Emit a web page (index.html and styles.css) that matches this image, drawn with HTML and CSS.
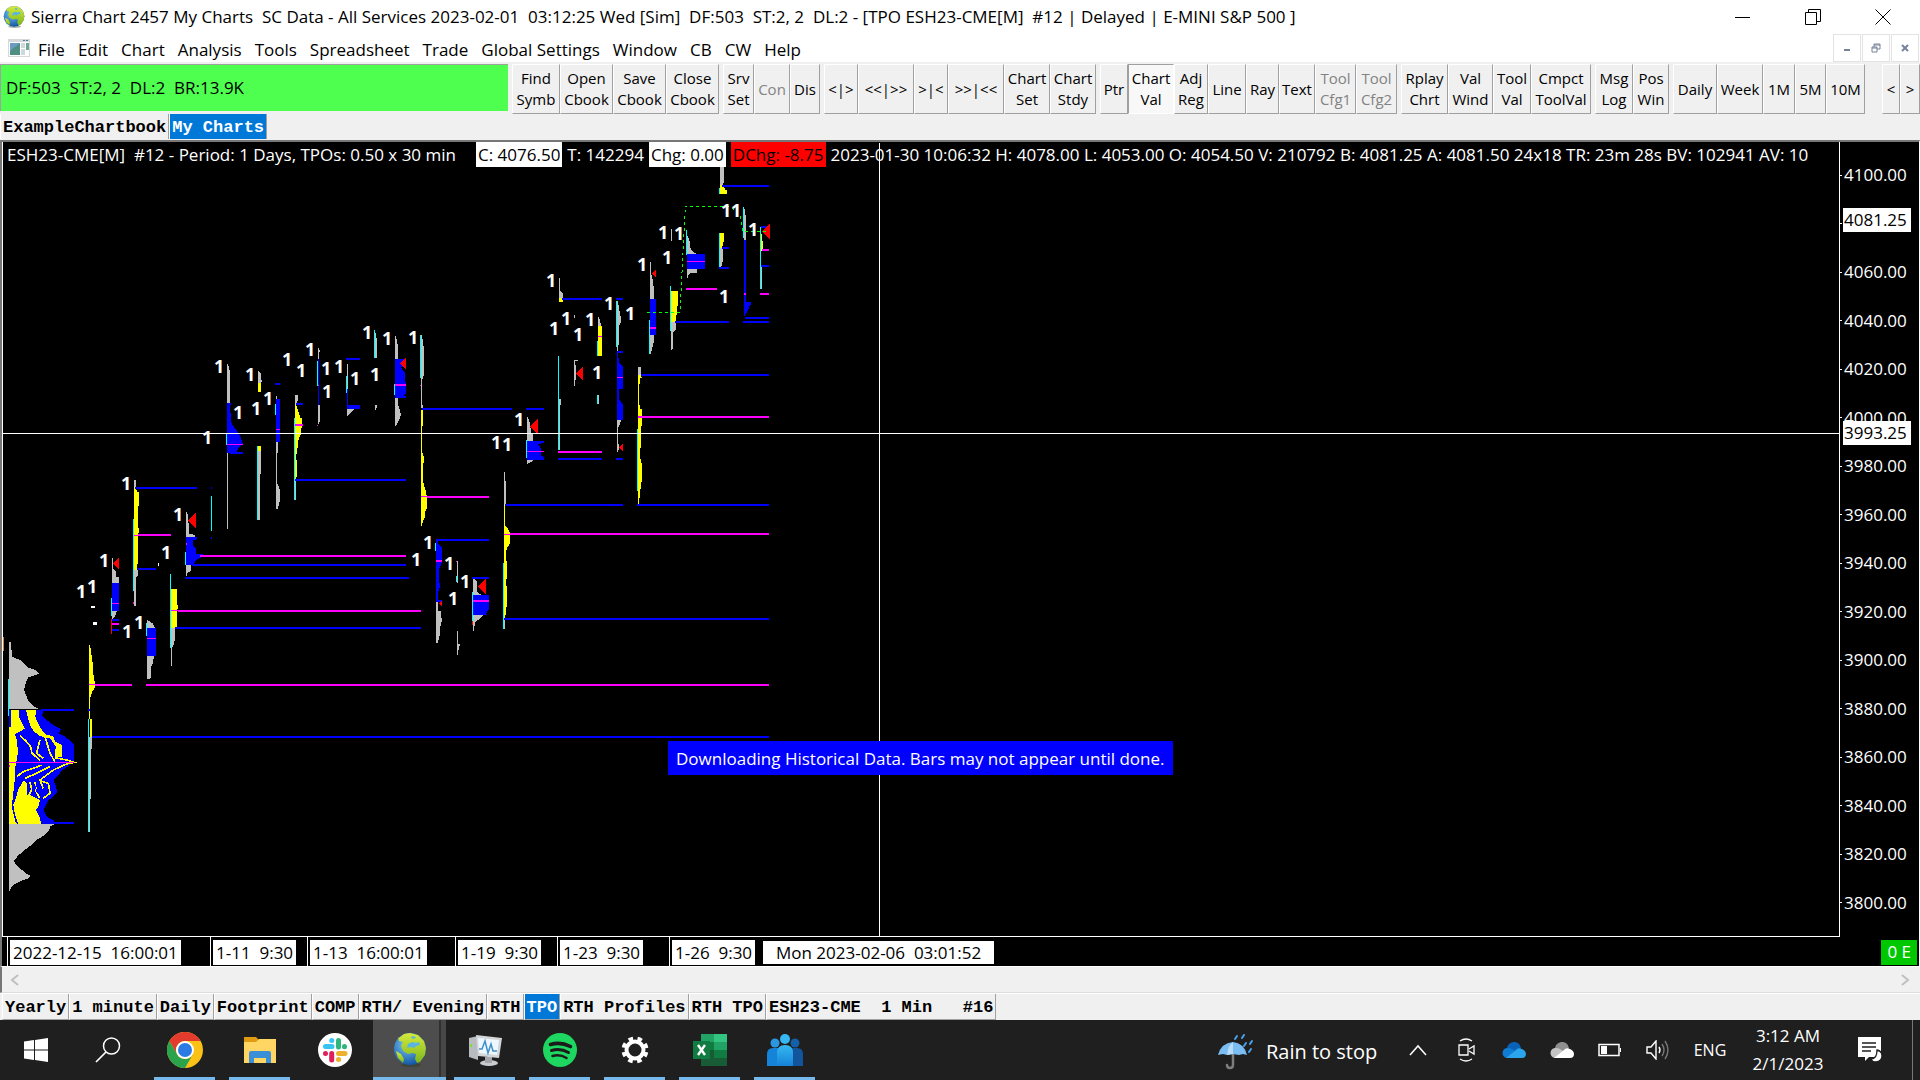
FILE: index.html
```html
<!DOCTYPE html>
<html lang="en">
<head>
<meta charset="utf-8">
<title>Sierra Chart</title>
<link rel="stylesheet" href="styles.css">
</head>
<body>
<svg class="defs" aria-hidden="true">
  <defs>
    <radialGradient id="sea" cx=".4" cy=".35" r=".7"><stop offset="0" stop-color="#7cc8f4"/><stop offset="1" stop-color="#0b4f9e"/></radialGradient>
    <linearGradient id="land" x1="0" y1="0" x2="0" y2="1"><stop offset="0" stop-color="#d6ea3c"/><stop offset="1" stop-color="#7db61c"/></linearGradient>
    <linearGradient id="people" x1="0" y1="0" x2="0" y2="1"><stop offset="0" stop-color="#35b8f1"/><stop offset="1" stop-color="#1583d8"/></linearGradient>
    <symbol id="globe" viewBox="0 0 34 36">
      <ellipse cx="18" cy="33" rx="10" ry="2" fill="#2b3a20" opacity=".4"/>
      <circle cx="17" cy="17" r="16" fill="url(#sea)"/>
      <path d="M6 6 11 2l6-1 8 2 6 6 2 7-1 7-5 7-3 1-2-4 1-5-4-1-4 1-5-3-2-5 2-4-4-1-1-4z" fill="url(#land)"/>
      <path d="M3 19l5 3 3 5-1 4-5-5z" fill="url(#land)"/>
      <path d="M15 12l4-2 4 1 3-1 1 3-4 1-2 2-3-1-4 1zM19 4l4 1-2 2-3-1z" fill="#5ab4e0"/>
    </symbol>
  </defs>
</svg>

<header class="titlebar">
  <svg class="app-icon" viewBox="0 0 34 36"><use href="#globe"/></svg>
  <h1 class="title">Sierra Chart 2457 My Charts&nbsp; SC Data - All Services 2023-02-01&nbsp; 03:12:25 Wed [Sim]&nbsp; DF:503&nbsp; ST:2, 2&nbsp; DL:2 - [TPO ESH23-CME[M]&nbsp; #12 | Delayed | E-MINI S&amp;P 500 ]</h1>
  <div class="win-controls">
    <button aria-label="Minimize"><svg width="16" height="16"><path d="M0 8.500H15" stroke="#000"/></svg></button>
    <button aria-label="Restore"><svg width="16" height="16"><path d="M.5 3.500h11v12h-11zM3.500 3V.5h12v12H12" fill="none" stroke="#000"/></svg></button>
    <button aria-label="Close"><svg width="16" height="16"><path d="M.5.5l15 15M15.500.5l-15 15" stroke="#000"/></svg></button>
  </div>
</header>

<nav class="menubar">
  <svg class="doc-icon" width="22" height="18"><path fill="#d5d9dc" d="M0 0h22v18H0z"/><path fill="#fff" d="M1 3h20v14H1z"/><path fill="#4f8f83" d="M2 4h10v12H2z"/><path fill="#6b9bc0" d="M2 4h10L2 12z"/><path fill="#cfd8de" d="M13 4h4v5h-4zM13 10h4v6h-4z"/><path fill="#6fa890" d="M18 4h3v7h-3z"/><path fill="#5b7896" d="M15 1h2v1h-2zM18 1h2v1h-2z"/></svg>
  <button>File</button><button>Edit</button><button>Chart</button><button>Analysis</button><button>Tools</button><button>Spreadsheet</button><button>Trade</button><button>Global Settings</button><button>Window</button><button>CB</button><button>CW</button><button>Help</button>
  <div class="mdi-controls">
    <button aria-label="Minimize chart"><svg width="10" height="10"><path d="M2 6h6v2H2z" fill="#77839a"/></svg></button>
    <button aria-label="Restore chart"><svg width="10" height="10"><path d="M1 4h5v5H1zM3 4V1h6v5H6M1 5h5M3 2h6" fill="none" stroke="#77839a"/></svg></button>
    <button aria-label="Close chart"><svg width="10" height="10"><path d="M2 2l6 6M8 2L2 8" stroke="#77839a" stroke-width="2"/></svg></button>
  </div>
</nav>

<div class="toolbar">
  <div class="status">DF:503&nbsp; ST:2, 2&nbsp; DL:2&nbsp; BR:13.9K</div>
  <div class="group g-book"><button>Find<br>Symb</button><button>Open<br>Cbook</button><button>Save<br>Cbook</button><button>Close<br>Cbook</button></div>
  <div class="group g-server"><button>Srv<br>Set</button><button disabled>Con</button><button>Dis</button></div>
  <div class="group g-space"><button>&lt;|&gt;</button><button>&lt;&lt;|&gt;&gt;</button><button>&gt;|&lt;</button><button>&gt;&gt;|&lt;&lt;</button><button>Chart<br>Set</button><button>Chart<br>Stdy</button></div>
  <div class="group g-tools"><button>Ptr</button><button class="pressed">Chart<br>Val</button><button>Adj<br>Reg</button><button>Line</button><button>Ray</button><button>Text</button><button disabled>Tool<br>Cfg1</button><button disabled>Tool<br>Cfg2</button></div>
  <div class="group g-values"><button>Rplay<br>Chrt</button><button>Val<br>Wind</button><button>Tool<br>Val</button><button>Cmpct<br>ToolVal</button></div>
  <div class="group g-logs"><button>Msg<br>Log</button><button>Pos<br>Win</button></div>
  <div class="group g-period"><button>Daily</button><button>Week</button><button>1M</button><button>5M</button><button>10M</button></div>
  <div class="group g-scroll"><button>&lt;</button><button>&gt;</button></div>
</div>

<nav class="tabs book-tabs"><button>ExampleChartbook</button><button class="active">My Charts</button></nav>

<main class="chart">
  <div class="plot">
    <div class="readout">
      <span class="name">ESH23-CME[M]&nbsp; #12 - Period: 1 Days, TPOs: 0.50 x 30 min</span>
      <span class="box">C: 4076.50</span>
      <span>T: 142294</span>
      <span class="box">Chg: 0.00</span>
      <span class="box down">DChg: -8.75</span>
      <span>2023-01-30 10:06:32 H: 4078.00 L: 4053.00 O: 4054.50 V: 210792 B: 4081.25 A: 4081.50 24x18 TR: 23m 28s BV: 102941 AV: 10</span>
    </div>
    <svg class="drawing" role="img" aria-label="TPO profiles">
      <g transform="translate(-3 -142)">
        <!-- December and early January -->
        <g transform="translate(0 460) scale(.33333333)">
          <path class="grey" d="M27 547h6l3 43 24 10 15 12 9 10 21 8 12 9-3 4-30 10-6 12-6 25 6 15 6 15 12 15 21 13H27zM27 1091h138l-15 9-3 12-9 10-28 18-20 18-18 14-18 15-12 15 6 13 15 13 17 13 12 7-8 8-18 6-24 12-9 9-6 12z"/>
          <path class="blue" d="M27 750h105l-6 15 14 15 20 15 23 13-8 12 20 10 20 15 7 10v50l-17 13-17 12-13 15-15 15 8 20 4 18-12 12-15 10-7 15-8 15 10 20 20 10 5 10H27z"/>
          <path class="yellow" d="M33 750h25l-1 22 9 18 9 15-15 10-15 7 5 18 4 35-4 25-5 25 1 25-4 25-2 25-4 30 6 30 8 31H27V800h6zM54 1091l-10-31-4-25 9-25 5-20 18-30 8 10v30l20 10 20 10-5 20-7 10 10 20 6 21zM78 750h30l-2 20 8 20 12 20 12 15 22 3 5 17 20 10 2 35-22 3v-18l3-15-18-25-30-7-18-13-12-20-6-20z"/>
          <path class="yellow-line" d="M60 828l15 12 17 20 4 20 24 20M165 893l35 7 22 7-22 5-40 18-20 15-20 15 10 25M50 950l20-15 30-10 25-10M75 955l35-15 40-20M90 965l5 25-10 20v35M120 962l25 8 5 30-20 15M120 840l-10 40 20 15M135 830l15 50 15 25M105 965l4 30 9 18"/>
          <path class="blue-line thin" d="M45 960l4 30-8 25-4 28 8 30 3 14M84 975l-3 30M104 975l8 25"/>
          <path class="cyan-line" d="M26 657v111M266 777v339M335 414v54M401 177v216M440 489v39M512 342v222M557 276v39M635 108v105"/>
          <path class="yellow" d="M267 555h3l9 60 2 40 4 12v15l-8 12-7 20v63h6v53h-6v-53h-3zM402 81h6l3 16h5v32l-2 40 2 45-3 36 2 30-4 50h-9zM513 387h18v45l3 5-3 20v45l-6 2h-12z"/>
          <path class="grey" d="M267 830h9v30l-4 20v137h-2v99h-3zM402 60h6v21h-6zM402 330h11v18l-6 5v84h-5zM336 294h3v30l9 12v14h9v19h-21zM336 453h15l-6 15-9 12zM441 480l18 10 6 14h-24zM441 588h21l-3 20-6 15v32l-12 4zM513 504h12v34l-6 22h-3v58h-3zM558 156h3l3 10v21l4 9v25l17 4v6h-27zM558 315h15v18l-12 6v9h-3zM681 0h3v207h-3zM774 0h9v20l-4 60v100h-5zM828 0h4v70l8 20v15l-7 42h-5z"/>
          <path class="blue" d="M336 369h21v84h-21zM441 504h26v84h-26zM558 231h34v6l-12 4v18l9 5v18h20v8l-18 9-14 16h-19z"/>
          <path class="yellow" d="M886 0h5v52h-5z"/><path class="cyan-line" d="M884 0v120M773 0v180"/>
          <path class="blue-line" d="M404 84h187M411 327h57M123 750h99M123 1089h99M336 480h21M336 510h21M633 84h3M633 234h3M264 750h6"/>
          <path class="magenta-line" d="M413 225h100M285 675h111M336 492h21"/>
          <path class="magenta-line thin" d="M27 907h195M267 674h18M336 430h21M402 225h12M441 535h26M513 452h20"/>
          <path class="magenta" d="M27 915h3v6h-3zM399 426h3v6h-3zM558 249h3v6h-3z"/>
          <path class="red" d="M333 477h3v45h-3zM339 310l18-17v34zM564 181l24-23v46z"/>
          <path class="white" d="M274 438h10v6h-10zM280 486h10v10h-10zM474 309h4v9h-4z"/>
          <path class="orange" d="M9 531h3v42H9z"/>
        </g>
        <!-- Mid January -->
        <g transform="translate(180 300) scale(.33333333)">
          <path class="grey" d="M141 192h3l6 24v93h-9zM141 460h3v227h-3zM234 213l9 6v18l3 6-3 6h-9zM236 450h7v71l-4 5v47l-3 17v70h-5V450zM288 285l5 12h-5zM288 423h6v30l-3 12v95l9 20v20l-7 27h-5zM345 285h9v17l-6 10h-3zM345 540h3v60h-3zM414 141l6 10-3 12v15h-3zM414 315h6v45l-3 12h-3zM501 192h3v75h-3zM501 327h24l-12 9-9 12h-3zM585 90l6 30v54h-6zM585 315h6v6l-3 9h-3zM645 108h3l6 30v39h-9zM645 293h8v20l6 15 4 15-5 17-7 12-3 6h-3zM723 105h3l6 45v75l-6 15v63l3 22h-6zM768 906h6v25l9 4v15l3 10-4 15-3 30-6 24h-5zM831 783h3v66h-3zM831 993h3v39h6l-4 15-2 18h-3zM879 834h3l9 12v30l15 9h-27zM879 945h30l-6 9-18 12-3 27h-3z"/>
          <path class="blue" d="M141 309h12l-3 12 4 48 12 18 10 12 8 18 5 15-12 10-8 15-5 3h-23zM288 297h11v128h-11zM414 178h3v137h-3zM501 267h3v54h-3zM501 315h39v12h-39zM645 177h33v16l-15 10 12 15v24l3 10v30l-13 8h-20zM768 720h5l3 15 9 5v48l-7 18v40l3 10-6 20v30h-7zM879 885h48v42l-10 15 10 3h-48z"/>
          <path class="yellow" d="M234 249h9v27h-9zM234 438h9v15h-9zM345 312h3l8 26 5 16h5v17l-3 29-8 20-3 30-3 15v65l-4 10zM723 330h6v45l-3 5v73l6 20v15l-3 5v52l6 20 6 25v35l-6 10v18l-6 10-3 15h-3z"/>
          <path class="cyan-line" d="M140 400v35M233 438v222M286 312v33M344 354v246M412 183v75M500 228v51M584 90v84M644 252v33M722 105v129M767 729v24M830 828v18M878 876v87M17 756v39M95 588v105"/>
          <path class="blue-line" d="M150 459h39M285 252h15M348 312h21M498 177h42M645 291h33M726 327h234M345 540h333M768 720h159M768 903h18M876 834h51"/>
          <path class="magenta-line" d="M345 375h24M645 255h33M741 591h186M768 783h18M879 903h48"/>
          <path class="magenta-line thin" d="M141 433h48M288 388h11M723 590h18M411 375h3M414 255h3M720 255h3M828 783h4"/>
          <path class="red" d="M660 190l18-17v34zM777 910l9-8v16zM894 860l24-23v46zM876 963h4v12h-4z"/>
        </g>
        <!-- Late January -->
        <g transform="translate(480 160) scale(.33333333)">
          <path class="grey" d="M237 354h3v36l9 10v14h-12zM237 717h6v14l-3 10v129h-3zM282 465h3v9h-3zM282 600h12v4h-8l2 40-3 34h-3zM354 468l4 8 6 22h-10zM414 423l3 25 6 25v15l-6 10v35l-3 42h-3V423zM411 780h12l-3 10-6 15v35l3 22-3 14h-3zM510 306h3v35l6 20 3 35v21h-12zM510 525h12v20l-6 20-3 18h-3zM573 207h3v36h-3zM573 486h15v22l-9 8v50l-3 4h-3zM620 220l9 25v15l6 10 6 8h7v7h-28zM621 327h30v12h-18l-9 6v9h-3zM720 21h11v48l-5 10h-6zM720 264h9v35l-5 22h-4zM792 138l5 30v72h-5zM843 320h3v66h-3zM141 768l9 20 3 32 6 4v19h-18zM141 900h21l-9 6-12 6zM72 936h3v24l3 5v5l-3 10v15l3 15v23h-6zM474 621h9v24l3 10h-12zM354 705h3v27h-3z"/>
          <path class="blue" d="M510 417h17v108h-17zM411 573h18v6h-15l3 30 12 12v66h-12v30l12 18v45h-18zM621 282h54v45h-54zM792 240h6v185l18 3-7 10-6 15-6 8-5 12zM141 843h51v6l-19 3 10 13v23l9 3v9h-51z"/>
          <path class="yellow" d="M237 413h11v13h-11zM354 498h12v90h-12zM573 393h21v34l-3 20-3 39h-15zM720 75h5l9 8v7h7v12h-21zM720 219h12v20l-6 25h-6zM843 202l3 38 3 5v25l-5 5v45h-3zM474 645h12l-6 12-3 30v35l3 25h6v45l-3 13v28l-3 60 6 20v43l-6 40-3 36h-3zM72 1032h3v48h-3z"/>
          <path class="cyan-line" d="M236 588v282M352 543v45M352 705v27M410 423v138M509 480v102M572 378v135M620 210v75M718 84v18M718 219v102M790 141v93M842 202v184M140 840v54M473 807v186"/>
          <path class="blue-line" d="M246 417h120M408 417h21M726 78h141M726 264h21M717 324h30M585 486h162M789 486h78M795 474h72M483 645h384M75 1035h354M471 1035h396M234 897h132M408 897h21M843 318h24M843 201h18M0 747h96M138 747h54M141 898h51"/>
          <path class="magenta-line" d="M618 387h93M474 771h393M234 876h132M846 270h21M840 402h27M510 504h17M792 402h6M0 1011h27"/>
          <path class="magenta-line thin" d="M354 529h12M411 652h18M621 304h54M141 874h51"/>
          <path class="red" d="M288 641l21-20v40zM417 862l12-11v22zM516 340l12-11v22zM150 799l24-23v46zM846 214l24-23v46z"/>
          <path class="average" d="M501 457h99l16-318h135l30 27 7 48h76"/>
        </g>
        <!-- Extended value areas -->
        <g transform="translate(380 380) scale(.33333333)">
          <path class="grey" d="M372 276h3v24l3 5v65h-6zM372 717h3v30h-3z"/>
          <path class="yellow" d="M372 375h3v62l9 10 6 12v30l-10 18-3 30 4 10v38l-4 30 3 5v58l-5 39h-3z"/>
          <path class="cyan-line" d="M370 549v198"/>
          <path class="blue-line" d="M372 717h795M-865 1071h2032"/>
          <path class="magenta-line" d="M390 462h777M-702 915h1869"/>
          <path class="magenta-line thin" d="M372 463h18"/>
        </g>
        <path class="magenta-line page" d="M200 556h206M178 611h243"/>
        <path class="blue-line page" d="M192 565h214M185 578h224M175 628h246"/>
        <g class="marks">
          <text x="121" y="490">1</text><text x="173" y="521">1</text><text x="99" y="567">1</text><text x="76" y="598">1</text><text x="87" y="593">1</text><text x="161" y="559">1</text><text x="122" y="638">1</text><text x="134" y="629">1</text>
          <text x="214" y="373">1</text><text x="233" y="419">1</text><text x="202" y="444">1</text><text x="245" y="381">1</text><text x="251" y="415">1</text><text x="263" y="405">1</text><text x="282" y="366">1</text><text x="296" y="377">1</text><text x="305" y="356">1</text><text x="321" y="375">1</text><text x="322" y="398">1</text><text x="334" y="373">1</text><text x="350" y="385">1</text><text x="362" y="339">1</text><text x="370" y="381">1</text><text x="382" y="345">1</text><text x="408" y="344">1</text>
          <text x="423" y="549">1</text><text x="411" y="566">1</text><text x="444" y="570">1</text><text x="460" y="588">1</text><text x="448" y="605">1</text>
          <text x="546" y="287">1</text><text x="549" y="335">1</text><text x="561" y="325">1</text><text x="573" y="341">1</text><text x="585" y="326">1</text><text x="604" y="310">1</text><text x="625" y="320">1</text><text x="592" y="379">1</text><text x="637" y="271">1</text><text x="658" y="239">1</text><text x="674" y="240">1</text><text x="662" y="264">1</text><text x="721" y="217">1</text><text x="731" y="217">1</text><text x="748" y="236">1</text><text x="719" y="303">1</text><text x="514" y="426">1</text><text x="491" y="449">1</text><text x="502" y="451">1</text>
        </g>
      </g>
      <rect class="white" x="0" y="291" width="100%" height="1"/>
      <rect class="white" x="876" y="1" width="1" height="100%"/>
    </svg>
    <p class="notice" role="status">Downloading Historical Data. Bars may not appear until done.</p>
  </div>
  <div class="price-axis">
    <ol>
      <li>4100.00</li><li></li><li>4060.00</li><li>4040.00</li><li>4020.00</li><li>4000.00</li><li>3980.00</li><li>3960.00</li><li>3940.00</li><li>3920.00</li><li>3900.00</li><li>3880.00</li><li>3860.00</li><li>3840.00</li><li>3820.00</li><li>3800.00</li>
    </ol>
    <span class="price last">4081.25</span>
    <span class="price cursor">3993.25</span>
  </div>
  <div class="time-axis">
    <span class="date"><b>2022-12-15&nbsp; 16:00:01</b></span><span class="date"><b>1-11&nbsp; 9:30</b></span><span class="date"><b>1-13&nbsp; 16:00:01</b></span><span class="date"><b>1-19&nbsp; 9:30</b></span><span class="date"><b>1-23&nbsp; 9:30</b></span><span class="date"><b>1-26&nbsp; 9:30</b></span>
    <span class="cursor-date">Mon 2023-02-06&nbsp; 03:01:52</span>
    <span class="orders">0 E</span>
  </div>
</main>

<div class="scrollbar">
  <button aria-label="Scroll left"><svg width="10" height="12"><path d="M8 1L2 6l6 5" fill="none" stroke="#bfbfbf" stroke-width="2"/></svg></button>
  <button aria-label="Scroll right"><svg width="10" height="12"><path d="M2 1l6 5-6 5" fill="none" stroke="#bfbfbf" stroke-width="2"/></svg></button>
</div>

<nav class="tabs sheet-tabs"><button>Yearly</button><button>1 minute</button><button>Daily</button><button>Footprint</button><button>COMP</button><button>RTH/ Evening</button><button>RTH</button><button class="active">TPO</button><button>RTH Profiles</button><button>RTH TPO</button><button>ESH23-CME&nbsp; 1 Min&nbsp;&nbsp; #16</button></nav>

<footer class="taskbar">
  <button class="sys" aria-label="Start"><svg width="24" height="24"><path fill="#fff" d="M0 3.500l10-1.500v9.500H0zM11 2l13-2v11.500H11zM0 12.500h10V22L0 20.500zM11 12.500h13V24l-13-2z"/></svg></button>
  <button class="sys" aria-label="Search"><svg width="26" height="26"><circle cx="16.500" cy="9" r="8" fill="none" stroke="#fff" stroke-width="1.500"/><path d="M11 15L1 25" stroke="#fff" stroke-width="1.700"/></svg></button>
  <div class="apps">
    <button class="open" aria-label="Chrome"><svg width="36" height="36"><circle cx="18" cy="18" r="18" fill="#fbc116"/><path fill="#e33b2e" d="M2.400 9A18 18 0 0 1 33.600 9H18a9 9 0 0 0-7.800 13.500z"/><path fill="#2ba24c" d="M2.400 9A18 18 0 0 0 18 36l7.800-13.500a9 9 0 0 1-15.600 0z"/><circle cx="18" cy="18" r="9" fill="#fff"/><circle cx="18" cy="18" r="7" fill="#2c7be5"/></svg></button>
    <button class="open" aria-label="File Explorer"><svg width="32" height="26"><path fill="#e09b12" d="M0 0h12l3 3v6H0z"/><path fill="#ffd564" d="M0 5h12l3-3h17v24H0z"/><path fill="#3a8fd6" d="M5 26V16q0-2 2-2h18q2 0 2 2v10h-5v-5H10v5z"/></svg></button>
    <button aria-label="Slack"><svg width="34" height="34"><circle cx="17" cy="17" r="17" fill="#fff"/><g stroke-width="5" stroke-linecap="round"><path stroke="#36c5f0" d="M7.500 13.500H14M13.700 7.500h.1"/><path stroke="#2eb67d" d="M20.500 7.500V14M26.500 13.700v-.1"/><path stroke="#ecb22e" d="M20.500 20.500H27M20.500 26.500h.1"/><path stroke="#e01e5a" d="M13.700 20.500V27M7.500 20.500v.1"/></g></svg></button>
    <button class="open current" aria-label="Sierra Chart"><svg width="34" height="36"><use href="#globe"/></svg></button>
    <button class="open" aria-label="Monitor"><svg width="34" height="34"><path fill="#b8bcc0" d="M1 5l9-2v24l-9-3z"/><path fill="#7ce03c" d="M2 11h2v3H2z"/><ellipse cx="21" cy="30" rx="9" ry="3" fill="#c9cdd0"/><path fill="#a3a7ab" d="M17 24h7v6h-7z"/><path fill="#d3d6d8" d="M8 2l26 3-3 20-21-2z"/><path fill="#eef7fd" d="M10 5l21 2-2 15-18-2z"/><path fill="none" stroke="#3f8fc8" stroke-width="1.500" d="M11 16h3l3-8 3 12 3-9 2 7h4"/></svg></button>
    <button class="open" aria-label="Spotify"><svg width="34" height="34"><circle cx="17" cy="17" r="17" fill="#1ed760"/><g fill="none" stroke="#1b1b1b" stroke-linecap="round"><path stroke-width="3.600" d="M7.500 11.500q10-3 20 2"/><path stroke-width="3" d="M8.500 17.500q9-2.500 17 2"/><path stroke-width="2.500" d="M9.500 23q7.500-2 14 2"/></g></svg></button>
    <button class="open" aria-label="Settings"><svg width="30" height="30"><circle cx="15" cy="15" r="8.500" fill="none" stroke="#fff" stroke-width="4"/><circle cx="15" cy="15" r="11.500" fill="none" stroke="#fff" stroke-width="4" stroke-dasharray="4.500 4.530" stroke-dashoffset="-2.200"/></svg></button>
    <button class="open" aria-label="Excel"><svg width="34" height="32"><path fill="#21a366" d="M8 0h13v8H8z"/><path fill="#33c481" d="M21 0h13v8H21z"/><path fill="#107c41" d="M8 8h13v8H8z"/><path fill="#21a366" d="M21 8h13v8H21z"/><path fill="#185c37" d="M8 16h26v16H8z"/><path fill="#107c41" d="M21 16h13v8H21zM0 7h17v18H0z"/><path d="M5 11l7 10M12 11L5 21" stroke="#fff" stroke-width="2.400"/></svg></button>
    <button class="open" aria-label="People"><svg width="36" height="32"><circle cx="8" cy="9" r="4.500" fill="#2a97e0"/><circle cx="28" cy="9" r="4.500" fill="#1460a8"/><path fill="#1583d8" d="M0 32V20q0-6 6-6h6v18z"/><path fill="#12559c" d="M36 32V20q0-6-6-6h-6v18z"/><circle cx="18" cy="5" r="5" fill="#35b8f1"/><path fill="url(#people)" d="M10 32V19q0-8 8-8t8 8v13z"/></svg></button>
  </div>
  <div class="tray">
    <button class="weather"><svg width="36" height="36"><path fill="none" stroke="#7d7d7d" stroke-width="2.500" stroke-linecap="round" d="M15 20v11q0 3-3 3t-3-3"/><path fill="#79bdf2" d="M0 21Q3 9 15 8q11 1 14 13l-4-1-4 1-6-1-6 1-4-1z"/><path fill="#b8dcfa" d="M9 21q1-10 6-13 0 6 0 12z"/><path fill="none" stroke="#4aa0ea" stroke-width="2" stroke-linecap="round" d="M19 2l-2 3M26 1l-2 3M28 9l-2 3M34 7l-2 3M33 15l-2 3"/></svg>Rain to stop</button>
    <button aria-label="Show hidden icons"><svg width="18" height="12"><path d="M1 11l8-9 8 9" fill="none" stroke="#fff" stroke-width="1.500"/></svg></button>
    <button aria-label="Camera"><svg width="18" height="24"><path d="M3 3q6-4 12 0M3 21q6 4 12 0M2 7h9v10H2zM12 11l5-3v8l-5-3" fill="none" stroke="#fff" stroke-width="1.300"/></svg></button>
    <button aria-label="OneDrive"><svg width="24" height="16"><path fill="#0a62b8" d="M5 8a7 7 0 0 1 14-2l-4 5z"/><path fill="#0f7bd4" d="M5 16a5 5 0 0 1 1-10q4 0 8 4l-2 6z"/><path fill="#2aa4ea" d="M4 16l10-8q2-3 6-1 4 2 4 5 0 4-4 4z"/></svg></button>
    <button aria-label="OneDrive personal"><svg width="24" height="16"><path fill="#8f8f8f" d="M5 8a7 7 0 0 1 14-2l-4 5z"/><path fill="#c4c4c4" d="M5 16a5 5 0 0 1 1-10q4 0 8 4l-2 6z"/><path fill="#fff" d="M4 16l10-8q2-3 6-1 4 2 4 5 0 4-4 4z"/></svg></button>
    <button aria-label="Battery"><svg width="24" height="14"><path d="M1 1.500h20v11H1z" fill="none" stroke="#fff" stroke-width="1.500"/><path fill="#fff" d="M3 3h6v8H3zM22 5h1v4h-1z"/></svg></button>
    <button aria-label="Volume"><svg width="24" height="20"><path d="M1 7h4l5-6v18l-5-6H1z" fill="none" stroke="#fff" stroke-width="1.400"/><path d="M13 7q2 3 0 6" fill="none" stroke="#fff" stroke-width="1.400"/><path d="M16 4q4 6 0 12M19 1q6 9 0 18" fill="none" stroke="#777" stroke-width="1.400"/></svg></button>
    <button class="lang">ENG</button>
    <button class="clock">3:12 AM<br>2/1/2023</button>
    <button class="alerts" aria-label="Notifications"><svg width="26" height="26"><path fill="#fff" d="M1 0h23v20H12l-4 4v-4H1z"/><path d="M5 6h14M5 10h14M5 14h9" stroke="#1f1f1f" stroke-width="1.500"/><path fill="#fff" stroke="#1f1f1f" stroke-width="1.300" d="M20 13q5 1 5 6t-6 6q-4 0-5-3 6 0 6-9z"/></svg></button>
  </div>
</footer>
</body>
</html>
```
FILE: styles.css
```css
* { box-sizing: border-box; }

body {
  margin: 0;
  min-height: 100vh;
  display: flex;
  flex-direction: column;
  background: #f0f0f0;
  color: #000;
  font: 17px/24px "Open Sans", "Noto Sans", sans-serif;
  overflow: hidden;
}

button {
  margin: 0;
  padding: 0;
  border: 0;
  background: none;
  color: inherit;
  font: inherit;
  white-space: nowrap;
}

.defs { position: absolute; width: 0; height: 0; }

/* Title and menu */
.titlebar {
  display: flex;
  align-items: center;
  height: 34px;
  padding-left: 3px;
  gap: 6px;
  background: #fff;
}
.app-icon { width: 22px; height: 24px; flex: none; }
.title { flex: 1; margin: 0; font-size: 17px; font-weight: 400; white-space: nowrap; }
.win-controls { display: flex; padding-right: 2px; }
.win-controls button { width: 70px; height: 34px; display: grid; place-items: center; }

.menubar {
  display: flex;
  align-items: center;
  height: 28px;
  padding-left: 8px;
  gap: 13px;
  background: #fff;
}
.menubar > button { padding-top: 3px; }
.doc-icon { flex: none; margin-right: -5px; }
.mdi-controls { display: flex; gap: 1px; margin-left: auto; padding-right: 1px; }
.mdi-controls button {
  width: 28px;
  height: 28px;
  display: grid;
  place-items: center;
  border: 1px solid #e3e3e3;
}

/* Toolbar */
.toolbar { display: flex; gap: 4px; height: 52px; padding-top: 2px; }
.status {
  flex: 1;
  display: flex;
  align-items: center;
  height: 47px;
  padding-left: 5px;
  background: #4fff4f;
  border-top: 1px solid #a0a0a0;
  border-left: 1px solid #a0a0a0;
  white-space: nowrap;
}
.group { display: grid; height: 50px; font-size: 15px; line-height: 21px; }
.group button {
  display: flex;
  align-items: center;
  justify-content: center;
  text-align: center;
  border: 1px solid #a0a0a0;
  border-top-color: #fff;
  border-left-color: #fff;
}
.group button:disabled { color: #838383; }
.group .pressed { background: #f8f8f8; border-color: #a0a0a0 #fff #fff #a0a0a0; }
.g-book { grid-template-columns: 48px 53px 53px 53px; }
.g-server { grid-template-columns: 31px 36px 30px; }
.g-space { grid-template-columns: 34px 56px 34px 56px 46px 46px; }
.g-tools { grid-template-columns: 28px 46px 34px 38px 33px 36px 41px 41px; }
.g-values { grid-template-columns: 47px 45px 38px 60px; }
.g-logs { grid-template-columns: 38px 36px; }
.g-period { grid-template-columns: 44px 46px 32px 31px 39px; }
.g-scroll { grid-template-columns: 18px 20px; margin-left: 13px; }

/* Chartbook and sheet tabs */
.tabs {
  display: flex;
  height: 26px;
  font: bold 17px/22px "Liberation Mono", monospace;
}
.tabs button {
  padding: 2px 2px 0;
  border-right: 1px solid #a0a0a0;
  border-left: 1px solid #fff;
}
.tabs .active { background: #0078d7; color: #fff; }
.book-tabs { padding-bottom: 1px; }
.sheet-tabs { height: 27px; padding-left: 2px; border-top: 1px solid #fff; }
.sheet-tabs button { border-bottom: 1px solid #a0a0a0; }

/* Chart window */
.chart {
  flex: 1;
  display: grid;
  grid-template-columns: 1fr 79px;
  grid-template-rows: 1fr 29px;
  border: 2px solid #777;
  border-right: 1px solid #fff;
  border-bottom: 1px solid #fff;
  background: #000;
  color: #fff;
}
.plot {
  position: relative;
  min-width: 0;
  overflow: hidden;
  border: 1px solid #fff;
  border-top: 0;
}
.drawing { position: absolute; left: 0; top: 0; width: 100%; height: 100%; shape-rendering: crispEdges; }
.readout {
  position: absolute;
  left: 4px;
  right: 0;
  top: 0;
  z-index: 1;
  display: flex;
  gap: 5px;
  overflow: hidden;
  line-height: 25px;
  white-space: nowrap;
}
.readout .name { margin-right: 15px; }
.readout .box { background: #fff; color: #000; padding: 0 2px; }
.readout .down { background: #f00; }
.notice {
  position: absolute;
  left: 665px;
  top: 599px;
  margin: 0;
  padding: 6px 8px 4px;
  background: #00f;
  white-space: nowrap;
}

.grey { fill: #c0c0c0; }
.blue { fill: #00f; }
.yellow { fill: #ff0; }
.magenta { fill: #f0f; }
.red { fill: #f00; }
.white { fill: #fff; }
.orange { fill: #d08030; }
.blue-line, .magenta-line { fill: none; stroke: #00f; stroke-width: 6; }
.magenta-line { stroke: #f0f; }
.yellow-line { fill: none; stroke: #ff0; stroke-width: 5; }
.cyan-line { fill: none; stroke: #0ff; stroke-width: 3; }
.thin { stroke-width: 3; }
.page { stroke-width: 2; }
.average { fill: none; stroke: #0f0; stroke-width: 3; stroke-dasharray: 9 9; }
.marks { fill: #fff; font-size: 18px; font-weight: 700; }

.price-axis { position: relative; padding: 9px 0 10px; }
.price-axis ol {
  display: flex;
  flex-direction: column;
  height: 100%;
  margin: 0;
  padding: 0;
  list-style: none;
}
.price-axis li { flex: 1; display: flex; align-items: center; gap: 2px; }
.price-axis li::before { content: ""; width: 2px; height: 1px; background: #fff; }
.price {
  position: absolute;
  left: 3px;
  right: 8px;
  padding-left: 1px;
  background: #fff;
  color: #000;
}
.last { top: 66px; }
.cursor { top: 279px; }

.time-axis {
  grid-column: 1 / -1;
  display: grid;
  grid-template-columns: 203px 97px 148px 102px 112px 94px auto 1fr;
  padding-left: 5px;
}
.date { border-left: 1px solid #fff; padding: 3px 0 0 2px; white-space: nowrap; }
.date b { display: inline-block; padding: 0 3px; background: #fff; color: #000; font-weight: 400; line-height: 25px; }
.cursor-date { margin: 4px 0 2px; padding: 0 13px; background: #fff; color: #000; line-height: 23px; white-space: nowrap; }
.orders { justify-self: end; margin: 3px 2px 1px 0; padding: 0 6px; background: #00c800; }

.scrollbar {
  display: flex;
  justify-content: space-between;
  align-items: center;
  height: 26px;
  padding: 0 10px 0 8px;
  border-left: 2px solid #777;
  border-bottom: 1px solid #ddd;
}
.scrollbar svg { display: block; }

/* Windows taskbar */
.taskbar { display: flex; height: 60px; background: #1f1f1f; color: #fff; }
.taskbar button { display: grid; place-items: center; }
.sys { width: 72px; }
.apps { display: flex; gap: 14px; padding-left: 10px; }
.apps button { width: 61px; }
.apps .open { border-bottom: 3px solid #76b9ed; padding-top: 3px; }
.apps .current {
  width: 73px;
  margin: 0 -6px;
  background: linear-gradient(90deg, #4d4d4d 66px, #303030 66px 68px, #474747 68px);
}
.tray { display: flex; margin-left: auto; padding-right: 11px; border-right: 7px solid #1f1f1f; box-shadow: inset -1px 0 #777; }
.tray button { width: 48px; }
.tray .weather { display: flex; align-items: center; gap: 12px; width: 176px; padding-top: 3px; font-size: 20px; }
.tray .lang { width: 56px; font-size: 16px; }
.tray .clock { width: 100px; line-height: 28px; }
.tray .alerts { width: 64px; }
```
